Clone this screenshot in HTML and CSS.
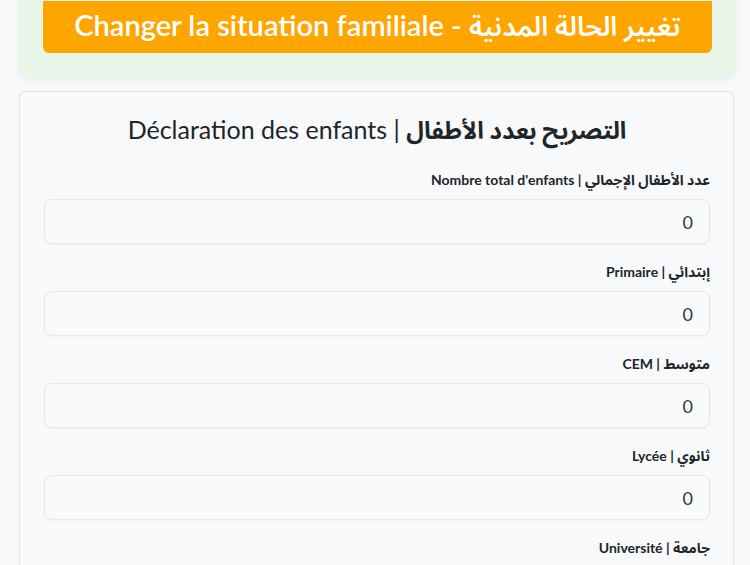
FILE: index.html
```html
<!DOCTYPE html>
<html lang="ar" dir="rtl">
<head>
<meta charset="utf-8">
<title>Déclaration des enfants</title>
<link rel="stylesheet" href="styles.css">
</head>
<body>
<div class="page">
  <div class="top-card">
    <button class="change-btn" type="button"><span class="btn-ar">تغيير الحالة المدنية</span> - Changer la situation familiale</button>
  </div>
  <div class="form-card">
    <h2 class="form-title"><span class="title-ar">التصريح بعدد الأطفال</span> | Déclaration des enfants</h2>
    <div class="field">
      <label class="field-label">عدد الأطفال الإجمالي | Nombre total d'enfants</label>
      <input class="field-input" type="text" value="0">
    </div>
    <div class="field">
      <label class="field-label">إبتدائي | Primaire</label>
      <input class="field-input" type="text" value="0">
    </div>
    <div class="field">
      <label class="field-label">متوسط | CEM</label>
      <input class="field-input" type="text" value="0">
    </div>
    <div class="field">
      <label class="field-label">ثانوي | Lycée</label>
      <input class="field-input" type="text" value="0">
    </div>
    <div class="field">
      <label class="field-label">جامعة | Université</label>
      <input class="field-input" type="text" value="0">
    </div>
  </div>
</div>
</body>
</html>
```
FILE: styles.css
```css
html, body {
  margin: 0;
  padding: 0;
}
body {
  background: #f6f8fa;
  font-family: Lato, "Noto Sans Arabic", "DejaVu Sans", sans-serif;
  color: #212529;
  overflow: hidden;
}
.page {
  padding: 0 15px 0 19px;
}
.top-card {
  margin-top: -23px;
  background: #e8f6e8;
  border-radius: 10px;
  padding: 24px 23px 24px 24px;
  box-shadow: 0 2px 6px rgba(0, 0, 0, 0.06);
}
.change-btn {
  display: block;
  width: 100%;
  height: 52px;
  border: none;
  border-radius: 0 0 6px 6px;
  background: #ffa500;
  color: #ffffff;
  font-family: Lato, "Noto Sans Arabic", "DejaVu Sans", sans-serif;
  font-size: 29px;
  font-weight: 600;
  line-height: 46px;
  padding: 0 0 4px;
  text-align: center;
}
.btn-ar {
  font-weight: 600;
  font-size: 27px;
}
.form-card {
  margin-top: 14px;
  margin-right: 1px;
  background: #f8f9fa;
  border: 1px solid #dfe2e6;
  border-radius: 6px;
  padding: 23px 23px 0 24px;
}
.form-title {
  margin: 0 0 25px;
  text-align: center;
  font-size: 25px;
  font-weight: 400;
  line-height: 28px;
  color: #212529;
}
.title-ar {
  font-weight: 700;
  font-size: 24px;
}
.field {
  margin-bottom: 17px;
}
.field-label {
  display: block;
  font-size: 14px;
  font-weight: 700;
  line-height: 22px;
  margin-bottom: 8px;
  color: #212529;
}
.field-input {
  display: block;
  box-sizing: border-box;
  width: 100%;
  height: 45px;
  border: 1px solid #e4e7eb;
  border-radius: 8px;
  background: #f9fafb;
  box-shadow: 0 1px 2px rgba(0, 0, 0, 0.03);
  padding: 0 16px;
  font-family: Lato, "Noto Sans Arabic", "DejaVu Sans", sans-serif;
  font-size: 18px;
  color: #333a40;
  text-align: right;
  direction: rtl;
}
```
